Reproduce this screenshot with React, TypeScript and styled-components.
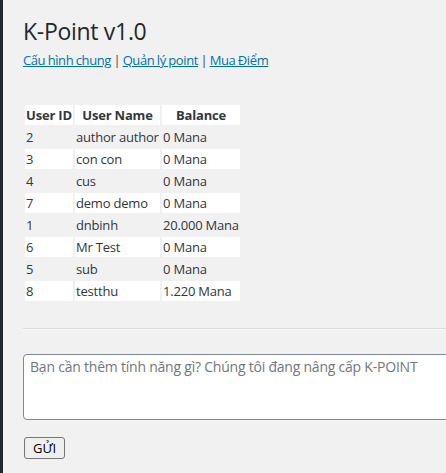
import React from "react";
import styled, { createGlobalStyle } from "styled-components";

const Global = createGlobalStyle`
  html, body { margin: 0; padding: 0; }
  body {
    background: #f1f1f1;
    overflow: hidden;
    font-family: "Open Sans", "Noto Sans", sans-serif;
    font-size: 13px;
    color: #444;
  }
`;

const Shell = styled.div`
  display: flex;
  min-height: 473px;
`;

const SideEdge = styled.div`
  width: 3px;
  flex: none;
  background: #23282d;
`;

const Content = styled.main`
  flex: 1;
  min-width: 0;
  padding-left: 20px;
  overflow: hidden;
`;

const Title = styled.h1`
  margin: 16px 0 0;
  font-size: 23px;
  font-weight: 400;
  line-height: 30px;
  letter-spacing: -0.3px;
  color: #23282d;
`;

const Nav = styled.p`
  margin: 5px 0 0;
  font-size: 13px;
  line-height: 18px;
  letter-spacing: -0.4px;
  word-spacing: -0.5px;
  color: #444;
`;

const NavLink = styled.a`
  color: #0073aa;
  text-decoration: underline;
`;

const Table = styled.table`
  margin-top: 34px;
  border-collapse: separate;
  border-spacing: 2px;
  table-layout: fixed;
  width: 219px;
  margin-left: 0;
  font-size: 13px;
  line-height: 18px;
  letter-spacing: -0.2px;
  color: #32373c;
`;

const Th = styled.th`
  background: #fff;
  padding: 1px;
  font-weight: 700;
  text-align: center;
  white-space: nowrap;
  overflow: visible;
`;

const Row = styled.tr<{ $striped: boolean }>`
  td {
    background: ${(p) => (p.$striped ? "#fff" : "transparent")};
  }
`;

const Td = styled.td`
  padding: 1px;
  white-space: nowrap;
  overflow: visible;
`;

const Rule = styled.hr`
  margin: 25px 0 0;
  border: 0;
  border-top: 1px solid #dcdcde;
  border-bottom: 1px solid #f9f9f9;
  height: 0;
`;

const Feedback = styled.textarea`
  display: block;
  margin-top: 24px;
  box-sizing: border-box;
  width: calc(100% + 40px);
  height: 66px;
  padding: 2px 6px;
  border: 1px solid #7e8993;
  border-radius: 4px;
  background: #fff;
  font-family: "Open Sans", "Noto Sans", sans-serif;
  font-size: 14px;
  line-height: 20px;
  letter-spacing: -0.22px;
  color: #32373c;
  resize: none;
  &::placeholder {
    color: #72777c;
    opacity: 1;
  }
`;

const SendButton = styled.button`
  display: block;
  margin: 17px 0 0 1px;
  box-sizing: border-box;
  width: 41px;
  height: 22px;
  padding: 0;
  border: 1px solid #767676;
  border-radius: 3px;
  background: #efefef;
  font-family: "Open Sans", "Noto Sans", sans-serif;
  font-size: 13px;
  color: #000;
`;

const users = [
  { id: 2, name: "author author", balance: "0 Mana" },
  { id: 3, name: "con con", balance: "0 Mana" },
  { id: 4, name: "cus", balance: "0 Mana" },
  { id: 7, name: "demo demo", balance: "0 Mana" },
  { id: 1, name: "dnbinh", balance: "20.000 Mana" },
  { id: 6, name: "Mr Test", balance: "0 Mana" },
  { id: 5, name: "sub", balance: "0 Mana" },
  { id: 8, name: "testthu", balance: "1.220 Mana" },
];

export default function App() {
  return (
    <>
      <Global />
      <Shell>
        <SideEdge />
        <Content>
          <Title>K-Point v1.0</Title>
          <Nav>
            <NavLink href="#">Cấu hình chung</NavLink> |{" "}
            <NavLink href="#">Quản lý point</NavLink> |{" "}
            <NavLink href="#">Mua Điểm</NavLink>
          </Nav>
          <Table>
            <colgroup>
              <col style={{ width: 48 }} />
              <col style={{ width: 85 }} />
              <col style={{ width: 78 }} />
            </colgroup>
            <thead>
              <tr>
                <Th>User ID</Th>
                <Th>User Name</Th>
                <Th>Balance</Th>
              </tr>
            </thead>
            <tbody>
              {users.map((u, i) => (
                <Row key={u.id} $striped={i % 2 === 1}>
                  <Td>{u.id}</Td>
                  <Td>{u.name}</Td>
                  <Td>{u.balance}</Td>
                </Row>
              ))}
            </tbody>
          </Table>
          <Rule />
          <Feedback placeholder="Bạn cần thêm tính năng gì? Chúng tôi đang nâng cấp K-POINT" />
          <SendButton type="button">GỬI</SendButton>
        </Content>
      </Shell>
    </>
  );
}
